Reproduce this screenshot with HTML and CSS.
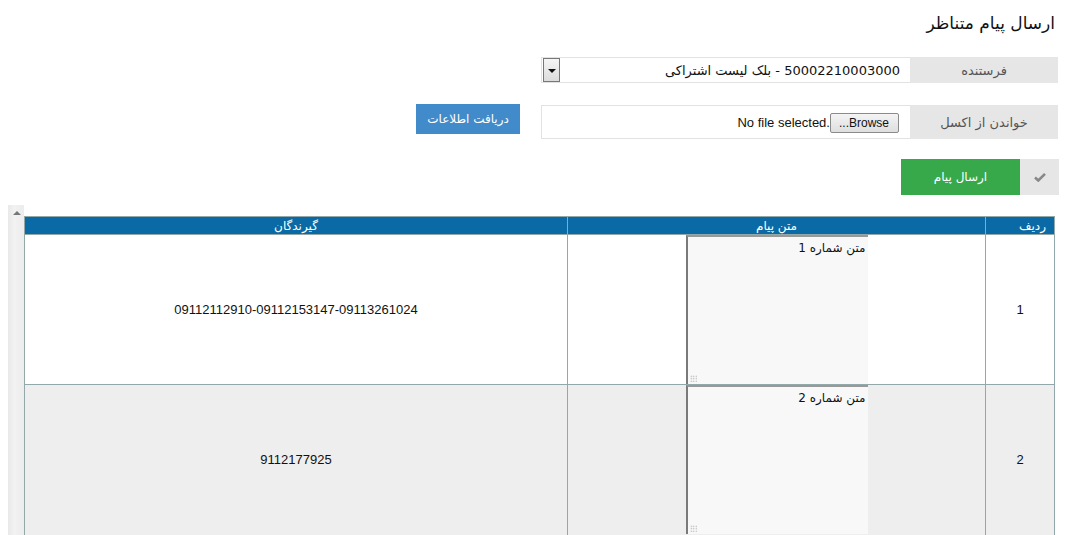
FILE: index.html
```html
<!DOCTYPE html>
<html lang="fa" dir="rtl">
<head>
    <meta charset="utf-8">
    <title>ارسال پیام متناظر</title>
    <link rel="stylesheet" href="styles.css">
</head>
<body>
    <div class="page">
        <h1 class="title">ارسال پیام متناظر</h1>

        <div class="formrow row-sender">
            <div class="group">
                <span class="addon">فرستنده</span>
                <div class="field selectfield">
                    <span class="selected">50002210003000 - بلک لیست اشتراکی</span>
                    <span class="droparrow"></span>
                </div>
            </div>
        </div>

        <div class="formrow row-file">
            <div class="group">
                <span class="addon">خواندن از اکسل</span>
                <div class="field filefield">
                    <span class="browse">Browse...</span>
                    <span class="nofile" dir="ltr">No file selected.</span>
                </div>
            </div>
            <button class="bluebutton">دریافت اطلاعات</button>
        </div>

        <div class="formrow row-send">
            <div class="sendgroup">
                <span class="checkaddon">
                    <svg width="12" height="10" viewBox="0 0 12 10"><path d="M1 5.5 L4.3 8.5 L11 1.8" fill="none" stroke="#888" stroke-width="2.6"/></svg>
                </span>
                <button class="greenbutton">ارسال پیام</button>
            </div>
        </div>

        <div class="tablearea">
            <table class="msgtable">
                <thead>
                    <tr>
                        <th class="col-num">ردیف</th>
                        <th class="col-msg">متن پیام</th>
                        <th class="col-rcv">گیرندگان</th>
                    </tr>
                </thead>
                <tbody>
                    <tr>
                        <td class="col-num">1</td>
                        <td class="col-msg"><div class="textbox">متن شماره 1<span class="grip"></span></div></td>
                        <td class="col-rcv">09112112910-09112153147-09113261024</td>
                    </tr>
                    <tr class="alt">
                        <td class="col-num">2</td>
                        <td class="col-msg"><div class="textbox">متن شماره 2<span class="grip"></span></div></td>
                        <td class="col-rcv">9112177925</td>
                    </tr>
                </tbody>
            </table>
            <div class="scrollstrip"><span class="uparrow"></span></div>
        </div>
    </div>
</body>
</html>
```

FILE: styles.css
```css
* {
    box-sizing: border-box;
}

body {
    margin: 0;
    font-family: "DejaVu Sans", "Liberation Sans", sans-serif;
    font-size: 12px;
    color: #111;
    background: #fff;
    overflow: hidden;
}

.page {
    padding: 0 13px 0 8px;
}

.title {
    font-size: 17px;
    font-weight: normal;
    margin: 0;
    padding: 13px 3px 0 0;
    height: 57px;
}

.formrow {
    display: flex;
    align-items: flex-start;
}

.row-sender {
    height: 48px;
}

.row-file {
    height: 54px;
}

.group {
    display: flex;
    width: 517px;
}

.addon {
    width: 148px;
    background: #e6e6e6;
    color: #555;
    font-size: 13px;
    display: flex;
    align-items: center;
    justify-content: center;
}

.field {
    flex: 1;
    border: 1px solid #e2e2e2;
    border-right: none;
    background: #fff;
    display: flex;
    align-items: center;
}

.row-sender .group {
    height: 26px;
}

.row-file .group {
    height: 34px;
}

.selectfield {
    padding: 0 0 0 1px;
}

.selected {
    flex: 1;
    font-size: 13px;
    padding-right: 10px;
}

.droparrow {
    width: 17px;
    height: 24px;
    border: 1px solid #777;
    background: linear-gradient(#f6f6f6, #dcdcdc);
    position: relative;
}

.droparrow::after {
    content: "";
    position: absolute;
    left: 4px;
    top: 10px;
    border-left: 4px solid transparent;
    border-right: 4px solid transparent;
    border-top: 4px solid #111;
}

.filefield {
    padding-right: 11px;
}

.browse {
    font-family: "Liberation Sans", sans-serif;
    font-size: 12px;
    border: 1px solid #8a8a8a;
    border-radius: 2px;
    background: linear-gradient(#f4f4f4, #dedede);
    padding: 2px 9px 2px 8px;
    margin-top: 1px;
}

.nofile {
    font-family: "Liberation Sans", sans-serif;
    font-size: 13px;
    margin-left: 2px;
}

.bluebutton {
    margin-right: 21px;
    width: 104px;
    height: 30px;
    margin-top: -1px;
    border: none;
    background: #428bca;
    color: #fff;
    font-family: inherit;
    font-size: 12px;
}

.row-send {
    height: 46px;
}

.sendgroup {
    display: flex;
    height: 36px;
    margin-right: -1px;
}

.checkaddon {
    width: 39px;
    background: #e6e6e6;
    display: flex;
    align-items: center;
    justify-content: center;
}

.greenbutton {
    width: 119px;
    border: none;
    background: #37a94b;
    color: #fff;
    font-family: inherit;
    font-size: 12px;
}

.tablearea {
    display: flex;
    height: 340px;
    margin-right: 3px;
}

.scrollstrip {
    width: 16px;
    background: linear-gradient(to right, #e9e9e9, #f2f2f2 40%, #ececec);
    position: relative;
}

.uparrow {
    position: absolute;
    left: 5px;
    top: 6px;
    border-left: 4px solid transparent;
    border-right: 4px solid transparent;
    border-bottom: 4px solid #777;
}

.msgtable {
    border-collapse: collapse;
    width: 1031px;
    margin-top: 11px;
    align-self: flex-start;
}

.msgtable th {
    background: #0a6aa6;
    color: #fff;
    font-weight: normal;
    font-size: 12px;
    height: 18px;
    padding: 0;
    border: 1px solid #93a8a8;
}

.msgtable th.col-num {
    text-align: right;
    padding-right: 8px;
}

.msgtable td {
    border: 1px solid #93a8a8;
    height: 149px;
    padding: 0;
    text-align: center;
    vertical-align: top;
    font-family: "Liberation Sans", sans-serif;
    font-size: 13px;
}

.msgtable td.col-num,
.msgtable td.col-rcv {
    vertical-align: middle;
}

.msgtable tr.alt td {
    background: #eeeeee;
    height: 153px;
}

.msgtable tr.alt td.col-num,
.msgtable tr.alt td.col-rcv {
    padding-bottom: 4px;
}

.col-num {
    width: 69px;
}

.col-msg {
    width: 418px;
}

.textbox {
    width: 182px;
    height: 149px;
    margin: 0 auto;
    background: #f8f8f8;
    border-left: 2px solid #7a7a7a;
    border-top: 2px solid #999;
    text-align: right;
    padding: 4px 2px 0 0;
    font-family: "DejaVu Sans", sans-serif;
    font-size: 12px;
    position: relative;
}

.grip {
    position: absolute;
    left: 2px;
    bottom: 2px;
    width: 7px;
    height: 7px;
    background: radial-gradient(circle, #aaa 0.6px, transparent 0.9px) 0 0 / 2.5px 2.5px;
}
```
